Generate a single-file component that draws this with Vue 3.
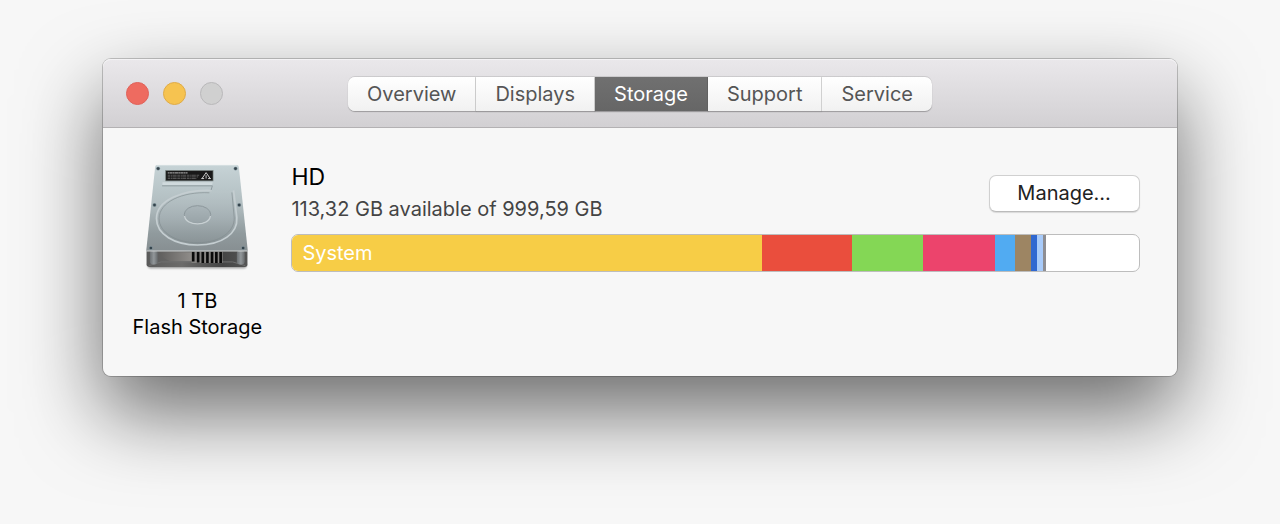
<template>
  <main class="desktop">
    <section class="window" aria-label="Storage">
      <header class="titlebar">
        <div class="lights">
          <button type="button" class="light light-close" aria-label="Close"></button>
          <button type="button" class="light light-minimize" aria-label="Minimize"></button>
          <button type="button" class="light light-zoom" aria-label="Zoom" disabled></button>
        </div>
        <nav class="tabs">
          <button
            v-for="tab in tabs"
            :key="tab"
            type="button"
            class="tab"
            :class="{ active: tab === activeTab }"
            @click="activeTab = tab"
          >
            {{ tab }}
          </button>
        </nav>
      </header>

      <div class="content">
        <div class="disk">
          <svg class="disk-icon" viewBox="3 24 399 330" aria-hidden="true">
            <defs>
              <linearGradient id="plate" x1="0" y1="0" x2="0" y2="1">
                <stop offset="0" stop-color="#c6d3d6" />
                <stop offset="0.45" stop-color="#b2bec1" />
                <stop offset="0.8" stop-color="#909a9d" />
                <stop offset="1" stop-color="#878f92" />
              </linearGradient>
              <linearGradient id="platter" x1="0" y1="0" x2="0" y2="1">
                <stop offset="0" stop-color="#bac6c9" />
                <stop offset="0.5" stop-color="#a6b1b5" />
                <stop offset="1" stop-color="#879194" />
              </linearGradient>
              <linearGradient id="hub" x1="0" y1="0" x2="0" y2="1">
                <stop offset="0" stop-color="#aab5b9" />
                <stop offset="1" stop-color="#98a3a7" />
              </linearGradient>
              <linearGradient id="front" x1="0" y1="0" x2="1" y2="0">
                <stop offset="0" stop-color="#5a5a5a" />
                <stop offset="0.35" stop-color="#6c6b6a" />
                <stop offset="0.75" stop-color="#444" />
                <stop offset="1" stop-color="#555" />
              </linearGradient>
              <linearGradient id="cavity" x1="0" y1="0" x2="1" y2="0">
                <stop offset="0" stop-color="#5e5d5c" />
                <stop offset="1" stop-color="#918e8b" />
              </linearGradient>
              <linearGradient id="post" x1="0" y1="0" x2="1" y2="0">
                <stop offset="0" stop-color="#6b6f72" />
                <stop offset="0.5" stop-color="#92979a" />
                <stop offset="1" stop-color="#66696b" />
              </linearGradient>
              <filter id="soft" x="-10%" y="-100%" width="120%" height="300%">
                <feGaussianBlur stdDeviation="4" />
              </filter>
              <filter id="bevel">
                <feGaussianBlur stdDeviation="1" />
              </filter>
            </defs>
            <rect x="54" y="326" width="298" height="16" rx="8" fill="#000" opacity="0.4" filter="url(#soft)" />
            <path d="M50 288H355V330Q355 338 347 338H60Q50 338 50 330Z" fill="url(#front)" />
            <path d="M86 294H188V321H122Q96 310 86 294Z" fill="url(#cavity)" />
            <path d="M58 334L94 323H310L348 334" fill="none" stroke="#6f6f6f" stroke-width="3" />
            <rect x="186" y="292" width="94" height="34" fill="#858381" />
            <path
              d="M191 292V322M206 292V325M220 292V326M234 292V326M248 292V326M261 292V326M274 292V326"
              stroke="#0a0a0a"
              stroke-width="8"
            />
            <rect x="60" y="288" width="24" height="43" rx="10" fill="url(#post)" />
            <rect x="323" y="288" width="24" height="43" rx="10" fill="url(#post)" />
            <path d="M81 30H323Q328 30 329 36L356 289H49L76 36Q77 30 81 30Z" fill="url(#plate)" />
            <path d="M49 290H356" stroke="#d3d7d8" stroke-width="3" />
            <path d="M81 31H323" stroke="#dfe7e9" stroke-width="2" />
            <path
              d="M247 107C158 103 80 138 80 192C80 240 135 272 204 272C280 272 326 236 323 190L313 107"
              fill="url(#platter)"
              opacity="0.7"
            />
            <g fill="none" filter="url(#bevel)">
              <path
                d="M240 114C158 110 88 142 88 192C88 234 139 265 204 265C273 265 316 231 315 190L308 113"
                stroke="#7e898d"
                stroke-width="3"
                opacity="0.6"
              />
              <path
                d="M247 107C158 103 80 138 80 192C80 240 135 272 204 272C280 272 326 236 323 190L313 107"
                stroke="#c5ced1"
                stroke-width="5"
              />
            </g>
            <path d="M107 46L97 84L98 91H248L252 84V46Z" fill="#bdc9cc" />
            <path d="M98 82H250L248 91H98Z" fill="#d0dadd" />
            <path d="M97 93H249L245 106" fill="none" stroke="#8e9a9e" stroke-width="3" />
            <rect x="108" y="47" width="143" height="31" fill="#191919" stroke="#77827f" stroke-width="2" />
            <path d="M114 54H174" stroke="#9b9b9b" stroke-width="4" stroke-dasharray="5 1 9 1" />
            <path
              d="M114 61H211M114 66H206M114 71H202"
              stroke="#5a5a5a"
              stroke-width="3"
              stroke-dasharray="8 2 4 1 12 2"
            />
            <path d="M230 53L243 72M230 53L217 72M216 71H224M236 71H244M230 61V71" stroke="#ccc" stroke-width="3" />
            <ellipse cx="204" cy="180" rx="40" ry="27" fill="url(#hub)" stroke="#8b969a" stroke-width="3" />
            <path d="M165 184C168 216 240 216 243 184" fill="none" stroke="#c8d0d3" stroke-width="4" />
            <g v-for="screw in screws" :key="screw.join()">
              <circle :cx="screw[0]" :cy="screw[1]" r="6" fill="#7c8d95" />
              <circle :cx="screw[0]" :cy="screw[1]" r="4" fill="#34434b" />
            </g>
          </svg>
          <p class="disk-label">1 TB<br />Flash Storage</p>
        </div>

        <div class="volume">
          <div class="volume-head">
            <div class="volume-info">
              <h1 class="volume-name">HD</h1>
              <p class="volume-space">113,32 GB available of 999,59 GB</p>
            </div>
            <button type="button" class="manage">Manage...</button>
          </div>
          <div class="usage">
            <div
              v-for="segment in segments"
              :key="segment.color"
              class="segment"
              :style="{ width: segment.share + '%', backgroundColor: segment.color }"
            >
              {{ segment.label }}
            </div>
          </div>
        </div>
      </div>
    </section>
  </main>
</template>

<script setup>
import { ref } from 'vue';

const tabs = ['Overview', 'Displays', 'Storage', 'Support', 'Service'];
const activeTab = ref('Storage');

// Share of the disk used by each category, in percent
const segments = [
  { label: 'System', share: 55.5, color: '#f7cd46' },
  { share: 10.6, color: '#ea4e3d' },
  { share: 8.4, color: '#84d755' },
  { share: 8.5, color: '#ec446c' },
  { share: 2.4, color: '#51abf2' },
  { share: 1.9, color: '#9d8563' },
  { share: 0.7, color: '#3068d0' },
  { share: 0.7, color: '#a8cbfa' },
  { share: 0.4, color: '#8e8e93' }
];

const screws = [
  [85, 41],
  [319, 41],
  [74, 151],
  [330, 151],
  [63, 281],
  [342, 281]
];
</script>

<style>
body {
  margin: 0;
  background-color: #f7f7f7;
}
</style>

<style scoped>
.desktop {
  box-sizing: border-box;
  min-height: 100vh;
  padding: 58px 8%;
  overflow: hidden;
  font-family: Inter, 'Liberation Sans', sans-serif;
  font-size: 20px;
  color: #000;
}
.window {
  border: 1px solid rgba(0, 0, 0, 0.2);
  border-radius: 9px;
  background-color: #f7f7f7;
  background-clip: padding-box;
  box-shadow: 0 36px 80px rgba(0, 0, 0, 0.56);
}
.titlebar {
  display: grid;
  grid-template-columns: 1fr auto 1fr;
  align-items: center;
  height: 68px;
  border-bottom: 1px solid #b3b1b3;
  border-radius: 8px 8px 0 0;
  background-image: linear-gradient(#eae8eb, #d2d0d3);
  box-shadow: inset 0 1px 0 #f4f3f5;
}
.lights {
  display: flex;
  gap: 14px;
  padding-left: 23px;
}
.light {
  width: 23px;
  height: 23px;
  padding: 0;
  border: 1px solid;
  border-radius: 50%;
}
.light-close {
  border-color: #e0625a;
  background-color: #ee6b60;
}
.light-minimize {
  border-color: #dfab48;
  background-color: #f6c350;
}
.light-zoom {
  border-color: #b9b8ba;
  background-color: #d0d0d0;
}
.tabs {
  display: flex;
  padding-top: 1px;
}
.tab {
  height: 34px;
  padding: 0 19px;
  border: none;
  border-right: 1px solid #d6d6d6;
  background-image: linear-gradient(#fff, #f1f1f1);
  box-shadow: 0 -1px 0 rgba(0, 0, 0, 0.1), 0 1px 1px rgba(0, 0, 0, 0.28);
  color: #555;
  font: inherit;
}
.tab:first-child {
  border-radius: 7px 0 0 7px;
}
.tab:last-child {
  border-right: none;
  border-radius: 0 7px 7px 0;
}
.tab.active {
  border-color: #666;
  background-image: linear-gradient(#707070, #666);
  color: #fff;
}
.content {
  display: flex;
  gap: 28px;
  padding: 35px 37px 36px 28px;
}
.disk {
  flex: none;
  width: 132px;
}
.disk-icon {
  display: block;
  width: 100%;
}
.disk-label {
  margin: 16px 0 0;
  line-height: 26px;
  text-align: center;
  white-space: nowrap;
}
.volume {
  flex: 1;
  min-width: 0;
}
.volume-head {
  display: flex;
  align-items: center;
  justify-content: space-between;
  padding-bottom: 11px;
}
.volume-name {
  margin: 0;
  font-size: 23px;
  font-weight: 400;
  line-height: 28px;
}
.volume-space {
  margin: 4px 0 0;
  line-height: 28px;
  color: #444;
}
.manage {
  width: 151px;
  height: 37px;
  border: 1px solid #d0d0d0;
  border-bottom-color: #bbb;
  border-radius: 7px;
  background-color: #fff;
  box-shadow: 0 1px 1px rgba(0, 0, 0, 0.12);
  color: #222;
  font: inherit;
}
.usage {
  display: flex;
  height: 36px;
  overflow: hidden;
  border: 1px solid #bdbdbd;
  border-radius: 7px;
  background-color: #fff;
}
.segment {
  box-sizing: border-box;
  line-height: 36px;
  color: #fff;
}
.segment:first-child {
  padding-left: 10px;
}
</style>
